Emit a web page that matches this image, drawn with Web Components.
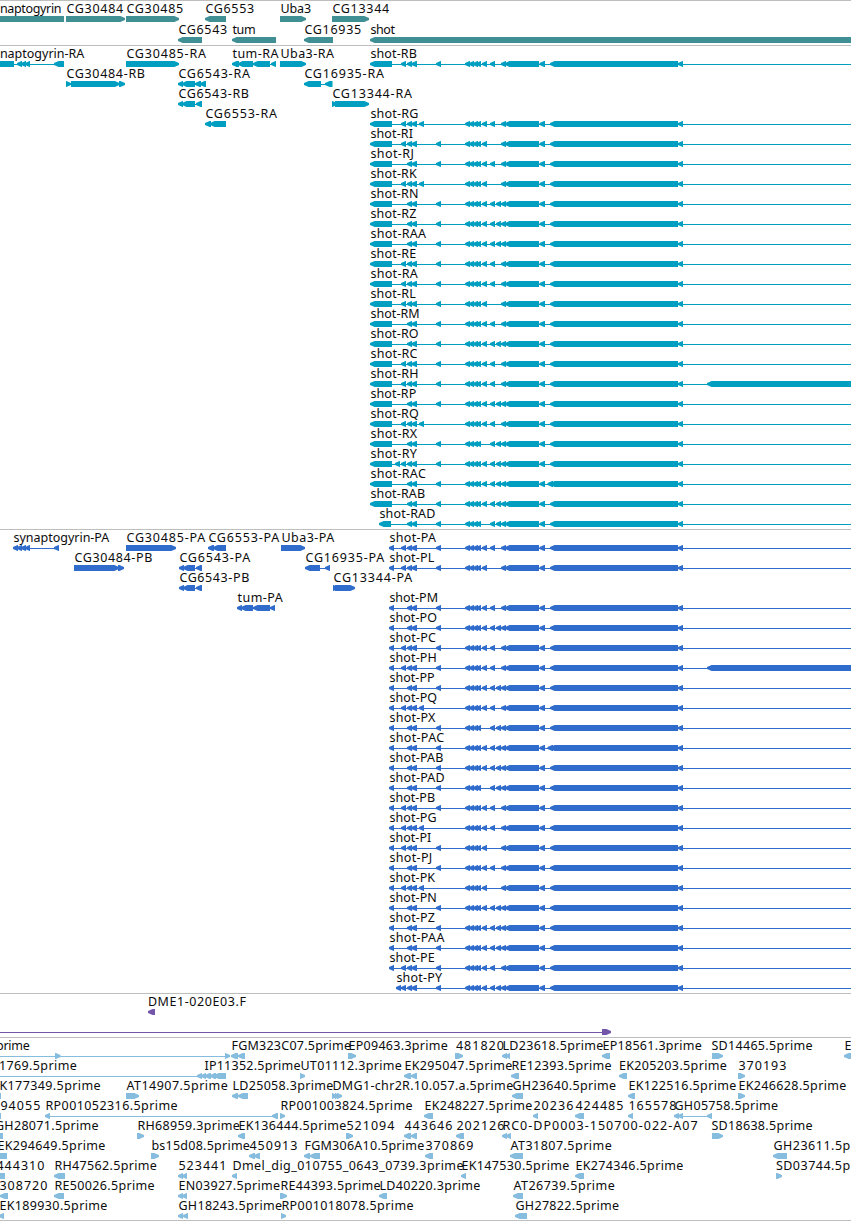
<!DOCTYPE html>
<html lang="en">
<head>
<meta charset="utf-8">
<title>Genome browser</title>
<style>
html,body{margin:0;padding:0;background:#fff}
body{width:851px;overflow-x:hidden}
</style>
</head>
<body>
<genome-browser></genome-browser>
<script>
// Row data: features split by ";", each "label|x|direction|start-end start-end ..."
const NAMED = {
  a:'370,392', z:'395,400', b:'401,406', c:'407,412', d:'411.5,417', e:'419,424', f:'436,441',
  g:'465,470 469,474 473,478 476,481', h:'482,487', i:'490,495', j:'496,501', k:'501,506', l:'505,539',
  m:'539.5,545', p:'547.5,553', n:'550,678', o:'678,683', H:'707,870', s:'389,394', t:'396,401', u:'379,391', v:'401,406', Z:'880,890'
};
const GENES = [
 'naptogyrin|-.5|<|-20,64;CG30484|66|>|66,125;CG30485|126|>|126,179;CG6553|205|<|205,226;Uba3|280|>|280,306;CG13344|332|>|332,369',
 'CG6543|178|<|178,202;tum|232|<|232,276;CG16935|304|<|304,333;shot|370|<|370,870'
];
const rna = (n, code) => `shot-${n}|${n==='RAD'?379:370}|<|${code}lmnoZ`;
const pro = (n, code) => `shot-${n}|${n==='PY'?396:389}|<|${code}lmnoZ`;
const TRANSCRIPTS = [
 'naptogyrin-RA|-.5|<|-20,14 17,22 21,26 25,30 54,64;CG30485-RA|126|>|126,179;tum-RA|232|<|232,239 238,253 253,270 271,276;Uba3-RA|280|>|280,306;' + rna('RB','abcdfghik'),
 'CG30484-RB|66|>|66,71 71,119.5 119,125;CG6543-RA|178|<|178,183 182,195 195,201 200,206;CG16935-RA|304|<|304,321 325,332.5',
 'CG6543-RB|178|<|178,183 182,195 196,202;CG13344-RA|332|>|332,337 335,369',
 'CG6553-RA|205|<|205,211 210,226;' + rna('RG','abcdeghik'),
 ...[['RI','abcdfghk'],['RJ','acdfghik'],['RK','abcdeghk'],['RN','acdfghijk'],['RZ','acdfghijk'],['RAA','acdfghijk'],
 ['RE','abcdfghik'],['RA','abcdfghik'],['RL','abcdfghk'],['RM','acdfghik'],['RO','acdfghijk'],['RC','abcdfghik'],['RH','abcdfghikH'],
 ['RP','acdfghijk'],['RQ','abcdeghik'],['RX','acdfgijk'],['RY','azbcdfghijk'],['RAC','acdfghijkp'],['RAB','acdfghijk'],['RAD','ucdfgijk']].map(r=>rna(...r))
];
const PROTEINS = [
 'synaptogyrin-PA|13|<|13,18 17,22 21,26 25,30 54,59;CG30485-PA|126|>|126,176;CG6553-PA|208|<|208,214 213,226;Uba3-PA|281|>|281,305;' + pro('PA','sbcdfghik'),
 'CG30484-PB|74|>|74,119 118,124;CG6543-PA|179|<|179,184 183,195 196,202;CG16935-PA|305|<|305,320 325,330;' + pro('PL','sbcdfghk'),
 'CG6543-PB|179|<|179,184 183,195 196,202;CG13344-PA|333|>|333,338 335,355',
 'tum-PA|237|<|237,242 241,253 253,270 270,275;' + pro('PM','scdfghik'),
 ...[['PO','scdfghijk'],['PC','sbcdfghik'],['PH','sbcdfghikH'],['PP','scdfghijk'],['PQ','sbcdeghik'],['PX','scdfgijk'],['PAC','scdfghijkp'],
 ['PAB','scdfghijk'],['PAD','scdfgijk'],['PB','sbcdfghik'],['PG','sbcdeghik'],['PI','sbcdfghk'],['PJ','scdfghik'],['PK','sbcdeghk'],
 ['PN','scdfghijk'],['PZ','scdfghijk'],['PAA','scdfghijk'],['PE','sbcdfghik'],['PY','tvcdfghijk']].map(r=>pro(...r))
];
const BACS = ['DME1-020E03.F|147.5|<|148,155','|0|>|-20,-10 602,611'];
const ESTS = [
 'prime|-4.5|>|-20,-10 55,60.5 225,230;FGM323C07.5prime|231|<|231,238 238,245;EP09463.3prime|348|>|348,356;481820|455.5|>|455,463;LD23618.5prime|502|<|502,507 506,510;EP18561.3prime|602|<|602,610;SD14465.5prime|711|>|712,723;E|844|<|844,853',
 '1769.5prime|-1.5|<|-20,-10 197,202 201,206 205,211 210,216 214,226;IP11352.5prime|204|>|;UT01112.3prime|300|>|300,305;EK295047.5prime|404|<|404,411 411,417;RE12393.5prime|511|<|511,519;EK205203.5prime|618.5|<|619,627;370193|738|>|738,745',
 'K177349.5prime|-1|<|-8,1;AT14907.5prime|126|>|126,139;LD25058.3prime|232|<|232,238 238,248;DMG1-chr2R.10.057.a.5prime|332|>|332,337 335,339 337,342;GH23640.5prime|512|<|512,523;EK122516.5prime|628|<|628,635;EK246628.5prime|738|>|738,745',
 '94055|0|<|-8,1;RP001052316.5prime|45|<|45,50 272,278;RP001003824.5prime|280|>|280,285;EK248227.5prime|424|<|424,433;20236|533|<|533,538;424485|575|<|575,584;165578|628|<|628,633;GH05758.5prime|674|<|674,679 678,683 707,712',
 'GH28071.5prime|-5.5|<|-8,3;RH68959.3prime|137|>|137,144;EK136444.5prime|238|<|238,245;521094|346|>|346,353;443646|404|<|404,411 411,417;202126|456|<|456,464;RC0-DP0003-150700-022-A07|502|<|502,507 506,511;SD18638.5prime|711|>|712,723',
 'EK294649.5prime|-3|<|-8,7;bs15d08.5prime|151|>|151,159;450913|249|<|249,255 254,260;FGM306A10.5prime|304|<|304,310 310,320;370869|425|<|425,433;AT31807.5prime|510|<|510,523;GH23611.5p|773|<|773,787',
 '444310|-4|<|-8,5;RH47562.5prime|54|<|54,65;523441|178|<|178,183 182,187;Dmel_dig_010755_0643_0739.3prime|232|<|232,237;EK147530.5prime|461|<|461,466;EK274346.5prime|575|<|575,584;SD03744.5p|775.5|>|776,782',
 '308720|-1|<|0,8;RE50026.5prime|54|<|54,64;EN03927.5prime|178|<|178,183 182,187;RE44393.5prime|280|>|280,287;LD40220.3prime|379|<|379,387;AT26739.5prime|513|<|513,523',
 'EK189930.5prime|-1|<|-1,4;GH18243.5prime|178|<|178,183 183,188;RP001018078.5prime|281|>|281,286;GH27822.5prime|515|<|515,527'
];
// Character advances of the label face
const ADV = {C:8,G:8.8,A:8.3,B:7.3,D:8.6,E:6.8,F:6.7,H:9,I:3.5,J:4.4,K:7.3,L:6.4,M:10.2,N:9,O:9.1,P:6.8,Q:9.3,R:7.5,S:6.6,T:7.1,U:8.5,X:7.6,Y:7.3,Z:7,
 s:6,y:6.2,n:7,a:6.9,p:7.2,t:4.6,o:7,g:7.2,r:5,i:3.5,m:11.3,e:7,h:7,u:7.4,b:7.3,d:7.3,c:6.2,l:3.5,'_':6.2,'-':7,'.':3.9};
const advance = s => [...s].reduce((w, ch) => w + (ADV[ch] || 8), 0);

customElements.define('feature-row', class extends HTMLElement {
  constructor(){ super(); this.attachShadow({mode:'open'}); }
  draw(data, height){
    const top = height - 6, mid = top + 3;
    let marks = '', labels = '';
    for (const item of data.split(';')) {
      const [name, x, dir, spec] = item.split('|');
      const text = /^[a-zA-Z]+$/.test(spec) ? [...spec].map(c => NAMED[c]).join(' ') : spec;
      const exons = text ? text.split(' ').map(p => p.split(',').map(Number)) : [];
      if (exons.length > 1) {
        const lo = Math.min(...exons.map(e => e[0])) + 3, hi = Math.max(...exons.map(e => e[1])) - 3;
        marks += `<rect x="${lo}" y="${mid}" width="${hi-lo}" height="1" shape-rendering="crispEdges"/>`;
      }
      for (const [p, q] of exons) {
        const t = Math.min(5, q - p);
        const [tip, neck, back] = dir === '<' ? [p, p + t - .4, q] : [q, q - t + .4, p];
        marks += `<path d="M${tip} ${mid-1}L${neck} ${top}H${back}V${top+6}H${neck}L${tip} ${mid+1}Z"/>`;
      }
      if (name) labels += `<text x="${+x + .4}" y="${height-9}" textLength="${advance(name).toFixed(1)}" lengthAdjust="spacing">${name}</text>`;
    }
    this.shadowRoot.innerHTML = `<style>
      :host{display:block;height:${height}px}
      svg{display:block;width:100%;height:100%;overflow:visible}
      path,rect{fill:var(--feature)}
      text{fill:#0c0c0c;font:12.5px "Noto Sans","DejaVu Sans",sans-serif;white-space:pre}
    </style><svg>${marks}${labels}</svg>`;
  }
});

customElements.define('genome-track', class extends HTMLElement {
  constructor(){
    super();
    this.attachShadow({mode:'open'}).innerHTML = `<style>
      :host{display:block;border-top:1px solid #bebebe;padding:1px 0 2px}
      :host([flush]){padding-top:0}
      :host([last]){padding-bottom:1px;border-bottom:1px solid #bebebe}
    </style><slot></slot>`;
  }
});

customElements.define('genome-browser', class extends HTMLElement {
  constructor(){
    super();
    const root = this.attachShadow({mode:'open'});
    root.innerHTML = `<style>
      :host{display:block;width:851px;height:1221px;overflow:hidden;background:#fff}
      #genes{--feature:#408f94}
      #transcripts{--feature:#009fc1}
      #proteins{--feature:#306ccc}
      #bacs{--feature:#7355a9}
      #ests{--feature:#86bcdd}
    </style>
    <genome-track id="genes" flush></genome-track>
    <genome-track id="transcripts"></genome-track>
    <genome-track id="proteins"></genome-track>
    <genome-track id="bacs"></genome-track>
    <genome-track id="ests" last></genome-track>`;
    const tracks = {genes:GENES, transcripts:TRANSCRIPTS, proteins:PROTEINS, bacs:BACS, ests:ESTS};
    for (const [id, rows] of Object.entries(tracks)) {
      for (const data of rows) {
        const row = document.createElement('feature-row');
        row.draw(data, id === 'genes' ? 21 : 20);
        root.getElementById(id).append(row);
      }
    }
  }
});
</script>
</body>
</html>
